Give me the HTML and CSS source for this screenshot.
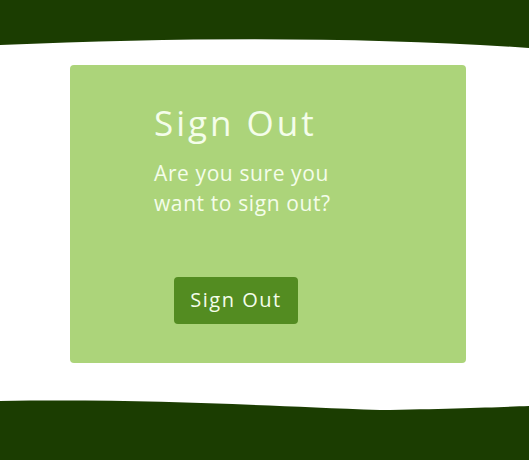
FILE: index.html
```html
<!DOCTYPE html>
<html lang="en">
<head>
<meta charset="utf-8">
<title>Sign Out</title>
<link rel="stylesheet" href="styles.css">
</head>
<body>
<div class="page">
  <svg class="wave wave-top" viewBox="0 0 529 50" width="529" height="50" preserveAspectRatio="none" aria-hidden="true">
    <path d="M0,0 H529 V48 Q300,32 0,45 Z" fill="#1b3d01"/>
  </svg>
  <main class="main">
    <section class="card">
      <h1 class="title">Sign Out</h1>
      <p class="text">Are you sure you want to sign out?</p>
      <button class="btn" type="button">Sign Out</button>
    </section>
  </main>
  <svg class="wave wave-bottom" viewBox="0 0 529 65" width="529" height="65" preserveAspectRatio="none" aria-hidden="true">
    <path d="M0,6 C150,4 250,10 380,15 C450,14 500,12 529,11 V65 H0 Z" fill="#1b3d01"/>
  </svg>
</div>
</body>
</html>
```
FILE: styles.css
```css
* { box-sizing: border-box; }
html, body { margin: 0; padding: 0; background: #ffffff; }
body { font-family: "Open Sans", "DejaVu Sans", sans-serif; }
.page {
  width: 529px;
  height: 460px;
  display: flex;
  flex-direction: column;
  overflow: hidden;
}
.wave { display: block; flex: none; }
.main {
  flex: 1;
  display: flex;
  justify-content: flex-start;
  padding: 15px 0 0 70px;
}
.card {
  width: 396px;
  height: 298px;
  background: #acd47a;
  border-radius: 4px;
  padding: 33px 0 0 84px;
  display: flex;
  flex-direction: column;
  align-items: flex-start;
}
.title {
  margin: 0;
  font-size: 35px;
  font-weight: 400;
  line-height: 50px;
  letter-spacing: 3px;
  color: #f4fdea;
}
.text {
  margin: 10px 0 0;
  width: 200px;
  font-size: 21px;
  line-height: 30px;
  letter-spacing: 0.6px;
  color: #f4fdea;
}
.btn {
  margin: 59px 0 0 20px;
  width: 124px;
  height: 47px;
  border: none;
  border-radius: 4px;
  background: #538c21;
  color: #f4fdea;
  font-family: inherit;
  font-size: 20px;
  letter-spacing: 1.5px;
  padding: 0 0 2px;
}
```
